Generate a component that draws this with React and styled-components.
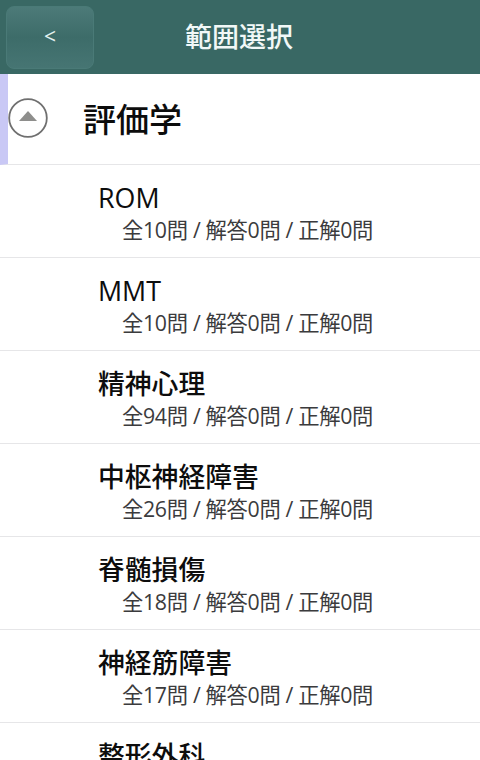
import React from "react";
import styled, { createGlobalStyle } from "styled-components";

const FONT = '"Open Sans", "Noto Sans CJK JP", sans-serif';

const items = [
  { name: "ROM", total: 10 },
  { name: "MMT", total: 10 },
  { name: "精神心理", total: 94 },
  { name: "中枢神経障害", total: 26 },
  { name: "脊髄損傷", total: 18 },
  { name: "神経筋障害", total: 17 },
  { name: "整形外科", total: 30 },
];

const GlobalStyle = createGlobalStyle`
  html, body {
    margin: 0;
    height: 100%;
    overflow: hidden;
    background: #fff;
  }
  * {
    box-sizing: border-box;
  }
`;

const Page = styled.div`
  width: 480px;
  height: 760px;
  overflow: hidden;
  font-family: ${FONT};
  background: #fff;
`;

const Header = styled.header`
  height: 74px;
  padding: 5px 0 5px 6px;
  display: grid;
  grid-template-columns: 88px 1fr 94px;
  align-items: center;
  background: #396864;
`;

const BackButton = styled.button`
  height: 63px;
  padding: 0 0 3px;
  border: 1px solid #4a7a77;
  border-radius: 8px;
  background: linear-gradient(#4c7a78, #3d6c69 50%, #467573);
  color: #e4f1f0;
  font-family: ${FONT};
  font-size: 21px;
`;

const HeaderTitle = styled.h1`
  margin: 0;
  text-align: center;
  color: #f1f8f7;
  font-size: 27px;
  font-weight: 500;
  line-height: 64px;
  transform: translateX(-1px);
`;

const SectionRow = styled.div`
  height: 91px;
  display: flex;
  align-items: center;
  border-left: 8px solid #c9c8f5;
  border-bottom: 1px solid #e6e6e8;
  padding-bottom: 3px;
`;

const Toggle = styled.svg`
  width: 40px;
  height: 40px;
  flex: none;
`;

const SectionTitle = styled.h2`
  margin: 4px 0 0 35px;
  color: #0c0c0c;
  font-size: 33px;
  font-weight: 500;
  line-height: 1.2;
`;

const Row = styled.div`
  height: 93px;
  padding: 15px 0 0 98px;
  border-bottom: 1px solid #e6e6e8;
`;

const RowTitle = styled.div`
  color: #0d0d0d;
  font-size: 26.8px;
  font-weight: 500;
  line-height: 35px;
`;

const RowStats = styled.div`
  margin-left: 24px;
  color: #3b3b3d;
  font-size: 21.3px;
  letter-spacing: -0.32px;
  line-height: 30px;
  white-space: nowrap;
`;

const App = () => (
  <Page>
    <GlobalStyle />
    <Header>
      <BackButton>&lt;</BackButton>
      <HeaderTitle>範囲選択</HeaderTitle>
    </Header>
    <SectionRow>
      <Toggle viewBox="0 0 40 40">
        <circle cx="20" cy="20" r="18.8" fill="#fff" stroke="#6f6f6f" strokeWidth="1.8" />
        <polygon points="11,23 20,13 29,23" fill="#8e8e8c" />
      </Toggle>
      <SectionTitle>評価学</SectionTitle>
    </SectionRow>
    {items.map((item) => (
      <Row key={item.name}>
        <RowTitle>{item.name}</RowTitle>
        <RowStats>全{item.total}問 / 解答0問 / 正解0問</RowStats>
      </Row>
    ))}
  </Page>
);

export default App;
